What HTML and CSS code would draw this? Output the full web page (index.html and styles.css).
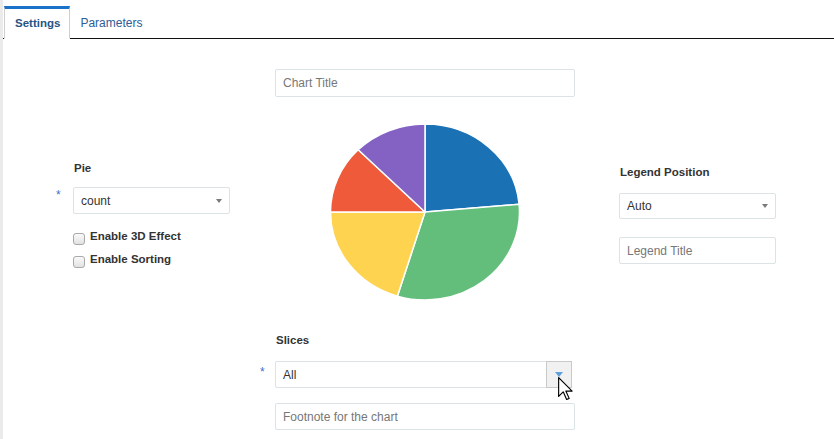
FILE: index.html
```html
<!DOCTYPE html>
<html lang="en">
<head>
    <meta charset="UTF-8">
    <title>Pie Chart Settings</title>
    <link rel="stylesheet" href="styles.css">
</head>
<body>
    <div class="page">
        <div class="tabs">
            <div class="tab tab-active">Settings</div>
            <div class="tab">Parameters</div>
        </div>
        <div class="main">
            <div class="col col-left">
                <div class="label indent-17">Pie</div>
                <div class="field">
                    <span class="req">*</span>
                    <div class="select w157 h27">
                        <span>count</span>
                        <span class="arrow"></span>
                    </div>
                </div>
                <div class="checks">
                    <label class="check"><input type="checkbox"> Enable 3D Effect</label>
                    <label class="check"><input type="checkbox"> Enable Sorting</label>
                </div>
            </div>

            <div class="col col-mid">
                <div class="field">
                    <span class="req req-mid"></span>
                    <div class="input w300 h28">Chart Title</div>
                </div>
                <div class="chart">
                    <svg width="192" height="180" viewBox="0 0 192 180">
                        <g stroke="#fff" stroke-width="1.5" stroke-linejoin="round">
                            <path fill="#1a72b5" d="M96,90 L96,2 A94.5,88 0 0 1 190.14,82.33 Z"/>
                            <path fill="#63be7b" d="M96,90 L190.14,82.33 A94.5,88 0 0 1 68.37,174.15 Z"/>
                            <path fill="#fed350" d="M96,90 L68.37,174.15 A94.5,88 0 0 1 1.5,90 Z"/>
                            <path fill="#ef5a3a" d="M96,90 L1.5,90 A94.5,88 0 0 1 29.18,27.77 Z"/>
                            <path fill="#8462c4" d="M96,90 L29.18,27.77 A94.5,88 0 0 1 96,2 Z"/>
                        </g>
                    </svg>
                </div>
                <div class="label indent-15 slices-label">Slices</div>
                <div class="field">
                    <span class="req req-mid req-low">*</span>
                    <div class="select select-slices w297 h27">
                        <span>All</span>
                        <span class="select-btn"><span class="arrow arrow-blue"></span></span>
                        <svg class="cursor" width="15" height="24" viewBox="0 0 13 21">
                            <path d="M0.5,0.5 V17 L4.5,13 L7.5,19.7 L9.7,18.7 L6.8,12.3 H12.3 Z" fill="#fff" stroke="#000" stroke-width="1" stroke-linejoin="round"/>
                        </svg>
                    </div>
                </div>
                <div class="field footnote">
                    <span class="req req-mid"></span>
                    <div class="input w300 h27">Footnote for the chart</div>
                </div>
            </div>

            <div class="col col-right">
                <div class="label">Legend Position</div>
                <div class="select w157 h26">
                    <span>Auto</span>
                    <span class="arrow"></span>
                </div>
                <div class="input w157 h27 legend-title">Legend Title</div>
            </div>
        </div>
    </div>
</body>
</html>
```

FILE: styles.css
```css
body {
    margin: 0;
    font-family: "Liberation Sans", Arial, sans-serif;
    font-size: 12px;
    color: #333;
    background: #fff;
}
.page {
    border-left: 3px solid #ebebeb;
    min-height: 439px;
    box-sizing: border-box;
}
.tabs {
    display: flex;
    padding-top: 6px;
    padding-left: 1px;
    border-bottom: 1px solid #111;
}
.tab {
    padding: 0 10px;
    line-height: 29px;
    border-top: 3px solid transparent;
    color: #2d5c98;
    margin-bottom: -1px;
    border-bottom: 1px solid transparent;
}
.tab-active {
    padding: 0 9px 0 10px;
    border-top-color: #1a73c8;
    border-left: 1px solid #cfcfcf;
    border-right: 1px solid #cfcfcf;
    border-bottom-color: #fff;
    background: #fff;
    font-weight: bold;
    font-size: 11.5px;
    color: #285382;
}
.main {
    display: flex;
    padding-left: 53px;
}
.col-left {
    width: 174px;
    padding-top: 121px;
    margin-right: 30px;
}
.col-mid {
    width: 315px;
    padding-top: 30px;
    margin-right: 44px;
}
.col-right {
    width: 157px;
    padding-top: 125px;
}
.label {
    font-weight: bold;
    font-size: 11.5px;
    line-height: 16px;
    margin-bottom: 11px;
    padding-left: 1px;
}
.col-right .label {
    margin-bottom: 13px;
}
.indent-17 {
    margin-left: 17px;
}
.indent-15 {
    margin-left: 15px;
}
.field {
    display: flex;
    align-items: flex-start;
}
.req {
    width: 17px;
    flex: none;
    color: #3f70c2;
    font-size: 12px;
    line-height: 12px;
    padding-top: 2px;
}
.req-mid {
    width: 15px;
}
.req-low {
    padding-top: 5px;
}
.input, .select {
    box-sizing: border-box;
    border: 1px solid #dbe3e6;
    border-radius: 2px;
    padding: 0 7px;
    display: flex;
    align-items: center;
    background: #fff;
}
.input {
    color: #777;
}
.select {
    justify-content: space-between;
    color: #333;
}
.w157 { width: 157px; }
.w297 { width: 297px; }
.w300 { width: 300px; }
.h26 { height: 26px; }
.h27 { height: 27px; }
.h28 { height: 28px; }
.arrow {
    width: 0;
    height: 0;
    border-left: 3.5px solid transparent;
    border-right: 3.5px solid transparent;
    border-top: 4px solid #7a7a7a;
}
.checks {
    margin-top: 13px;
    padding-left: 17px;
}
.check {
    display: flex;
    align-items: center;
    line-height: 18px;
    font-weight: bold;
    font-size: 11.5px;
    margin-bottom: 5px;
}
.check input {
    appearance: none;
    width: 12px;
    height: 12px;
    margin: 6px 5px 0 0;
    border: 1px solid #a9a9a9;
    border-radius: 3px;
    background: linear-gradient(#fafafa, #e2e2e2);
    box-sizing: border-box;
}
.chart {
    margin: 25px 0 0 69px;
    height: 180px;
}
.chart svg {
    display: block;
}
.slices-label {
    margin-top: 30px;
    margin-bottom: 13px;
}
.select-slices {
    position: relative;
    padding-right: 0;
}
.select-btn {
    width: 26px;
    height: 27px;
    margin: -1px -1px -1px 0;
    box-sizing: border-box;
    border: 1px solid #c9c9c9;
    background: #f1f1f1;
    display: flex;
    align-items: center;
    justify-content: center;
}
.arrow-blue {
    border-left-width: 4px;
    border-right-width: 4px;
    border-top: 5px solid #5ea0dc;
}
.cursor {
    position: absolute;
    left: 282px;
    top: 15px;
}
.footnote {
    margin-top: 15px;
}
.legend-title {
    margin-top: 18px;
}
```
